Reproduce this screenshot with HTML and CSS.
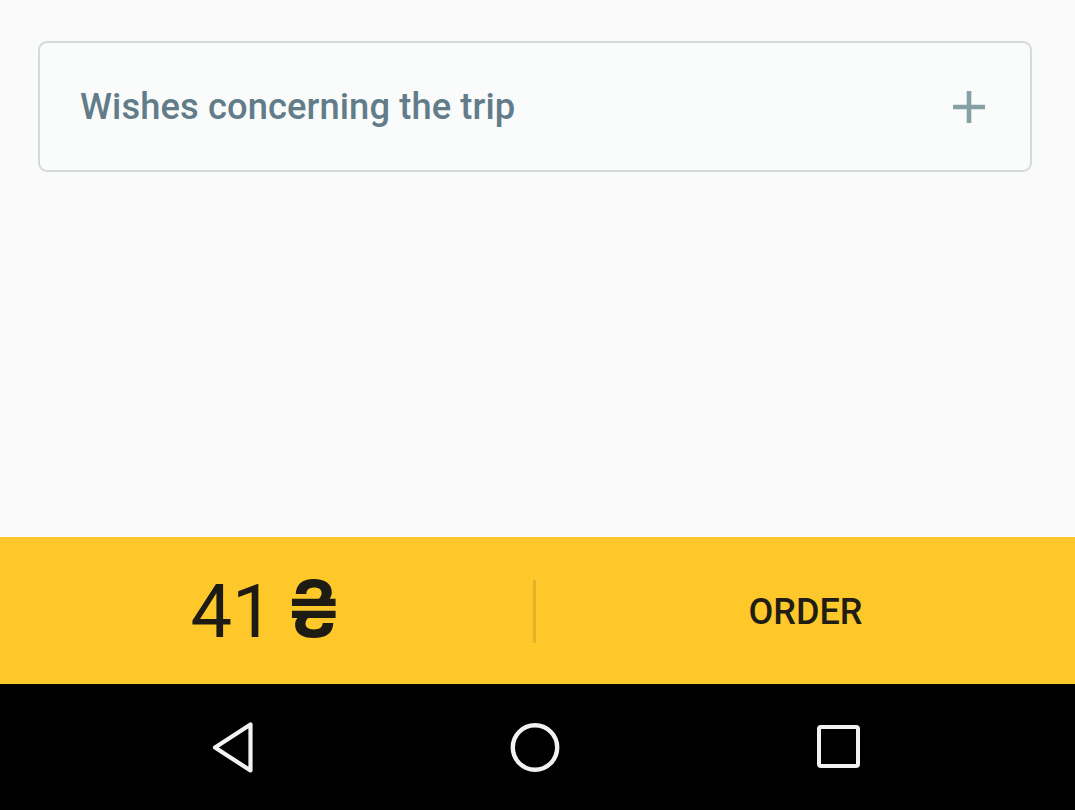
FILE: index.html
```html
<!DOCTYPE html>
<html>
<head>
<meta charset="utf-8">
<link rel="stylesheet" href="styles.css">
</head>
<body>
<div class="screen">
  <main class="content">
    <div class="wish-box">
      <span class="wish-text">Wishes concerning the trip</span>
      <svg class="plus" width="34" height="34" viewBox="0 0 34 34"><path d="M17 1V33M1 17H33" stroke="#86a0a6" stroke-width="4.6" fill="none"/></svg>
    </div>
  </main>
  <div class="order-bar">
    <div class="price">41 <span class="currency">₴</span></div>
    <div class="divider"></div>
    <div class="order">ORDER</div>
  </div>
  <nav class="navbar">
    <svg class="nav-icon" width="60" height="60" viewBox="0 0 60 60"><path d="M48.5 7.5V53.5L13 30.5Z" stroke="#f2f2f2" stroke-width="4.2" fill="none" stroke-linejoin="round"/></svg>
    <svg class="nav-icon" width="60" height="60" viewBox="0 0 60 60"><circle cx="30" cy="30.5" r="22.2" stroke="#f2f2f2" stroke-width="4.4" fill="none"/></svg>
    <svg class="nav-icon" width="60" height="60" viewBox="0 0 60 60"><rect x="11" y="10" width="39" height="39" rx="2" stroke="#f2f2f2" stroke-width="4" fill="none"/></svg>
  </nav>
</div>
</body>
</html>
```
FILE: styles.css
```css
html, body {
  margin: 0;
  padding: 0;
}
body {
  background: #fafafa;
  font-family: Roboto, "Liberation Sans", sans-serif;
}
.screen {
  width: 1075px;
  height: 810px;
  display: flex;
  flex-direction: column;
  overflow: hidden;
}
.content {
  height: 537px;
  box-sizing: border-box;
  padding: 41px 43px 0 38px;
  background: #fafafa;
}
.wish-box {
  height: 131px;
  box-sizing: border-box;
  border: 2px solid #d4dbdb;
  border-radius: 9px;
  background: #fafbfb;
  display: flex;
  align-items: center;
  justify-content: space-between;
  padding: 0 44px 0 40px;
}
.wish-text {
  font-size: 36.3px;
  font-weight: 500;
  color: #627d89;
  letter-spacing: 0.1px;
}
.plus {
  display: block;
}
.order-bar {
  height: 147px;
  background: #fec82a;
  display: flex;
  align-items: center;
}
.price {
  width: 533px;
  box-sizing: border-box;
  padding-right: 1px;
  text-align: center;
  font-size: 74px;
  color: #1e1a14;
  padding-top: 2px;
}
.currency {
  font-family: Inter, Roboto, sans-serif;
  font-size: 79px;
  font-weight: 600;
  margin-left: -6px;
  line-height: 1;
}
.divider {
  width: 3px;
  height: 63px;
  background: #e2b22a;
  margin-top: 2px;
}
.order {
  flex: 1;
  text-align: center;
  font-size: 36px;
  font-weight: 500;
  color: #221d14;
  padding-top: 2px;
}
.navbar {
  height: 126px;
  background: #000;
  display: flex;
  align-items: center;
  justify-content: center;
  gap: 243px;
  padding-right: 6px;
}
.nav-icon {
  display: block;
}
```
